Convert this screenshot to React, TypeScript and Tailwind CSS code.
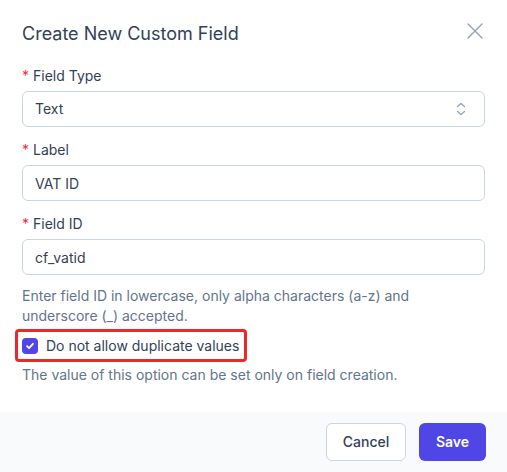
import { useState } from "react";

function Label({ text }: { text: string }) {
  return (
    <label className="block text-sm leading-5 text-slate-700 mb-[5px]">
      <span className="text-red-500 mr-1">*</span>
      {text}
    </label>
  );
}

export default function App() {
  const [fields, setFields] = useState({ type: "Text", label: "VAT ID", id: "cf_vatid" });
  const [unique, setUnique] = useState(true);

  return (
    <div className="w-[507px] h-[472px] bg-white flex flex-col" style={{ fontFamily: "Inter, 'Noto Sans', sans-serif" }}>
      <div className="px-[22px] pt-5 flex-1">
        <div className="flex items-start justify-between">
          <h2 className="text-lg leading-7 text-slate-700 font-normal">Create New Custom Field</h2>
          <button className="mt-[2px] mr-[1px] text-slate-400">
            <svg width="18" height="18" viewBox="0 0 18 18" fill="none" stroke="currentColor" strokeWidth="1.4" strokeLinecap="round">
              <path d="M2 2l14 14M16 2L2 16" />
            </svg>
          </button>
        </div>

        <div className="mt-[18px]">
          <Label text="Field Type" />
          <div className="h-9 rounded-md border border-slate-300 flex items-center justify-between pl-3 pr-[18px] text-sm text-gray-700">
            <span>{fields.type}</span>
            <svg width="10" height="14" viewBox="0 0 10 14" fill="none" stroke="#94a3b8" strokeWidth="1.3" strokeLinecap="round" strokeLinejoin="round">
              <path d="M1.5 4.5L5 1.5l3.5 3M1.5 9.5L5 12.5l3.5-3" />
            </svg>
          </div>
        </div>

        <div className="mt-[13px]">
          <Label text="Label" />
          <input
            className="w-full h-9 rounded-md border border-slate-300 px-3 text-sm text-gray-700 outline-none"
            value={fields.label}
            onChange={(e) => setFields({ ...fields, label: e.target.value })}
          />
        </div>

        <div className="mt-[13px]">
          <Label text="Field ID" />
          <input
            className="w-full h-9 rounded-md border border-slate-300 px-3 text-sm text-gray-700 outline-none"
            value={fields.id}
            onChange={(e) => setFields({ ...fields, id: e.target.value })}
          />
        </div>

        <p className="mt-[11px] text-sm leading-5 text-slate-500">
          Enter field ID in lowercase, only alpha characters (a-z) and underscore (_) accepted.
        </p>

        <label className="mt-[3px] -ml-[7px] w-[232px] h-[33px] flex items-center gap-2 border-[3px] border-[#f0262b] rounded-[4px] pl-1">
          <span
            onClick={() => setUnique(!unique)}
            className="w-4 h-4 rounded-[4px] bg-[#4f46e5] flex items-center justify-center"
          >
            {unique && (
              <svg width="10" height="10" viewBox="0 0 10 10" fill="none" stroke="white" strokeWidth="1.8" strokeLinecap="round" strokeLinejoin="round">
                <path d="M2 5.2l2 2 4-4.4" />
              </svg>
            )}
          </span>
          <span className="text-sm text-slate-700">Do not allow duplicate values</span>
        </label>

        <p className="mt-[3px] text-sm leading-5 text-slate-500">The value of this option can be set only on field creation.</p>
      </div>

      <div className="h-[60px] bg-slate-50 flex items-center justify-end gap-[13px] pl-[22px] pr-[21px]">
        <button className="h-[38px] w-20 rounded-md border border-slate-300 bg-white text-sm font-medium text-slate-700">Cancel</button>
        <button className="h-[38px] w-[67px] rounded-md bg-[#4f46e5] text-sm font-semibold text-white">Save</button>
      </div>
    </div>
  );
}
